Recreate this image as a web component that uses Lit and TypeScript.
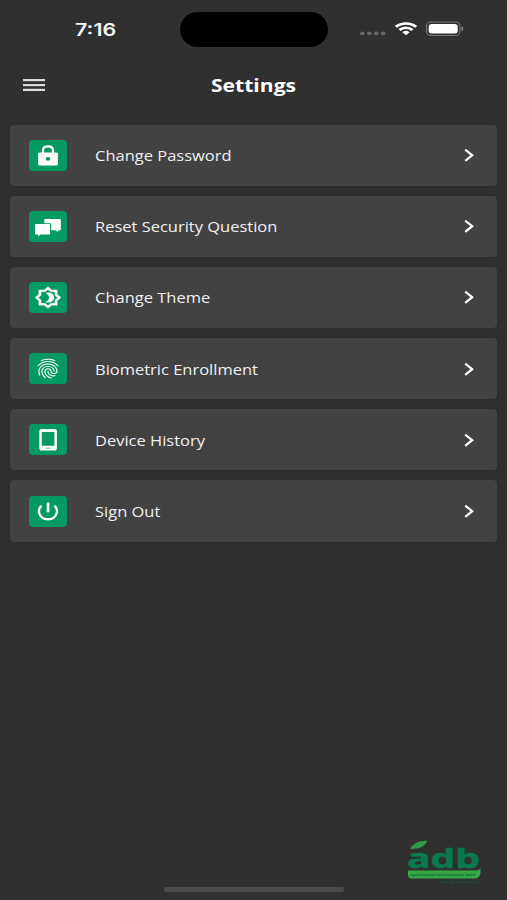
import { LitElement, html, svg, css, type SVGTemplateResult } from "lit";
import { customElement, property } from "lit/decorators.js";

const icons: Record<string, SVGTemplateResult> = {
  lock: svg`
    <path d="M14 13.5V10.6C14 7.8 16.1 6.3 19 6.3S24 7.8 24 10.6V13.5" fill="none" stroke="#fff" stroke-width="2.3"/>
    <rect x="9.1" y="12.4" width="19.8" height="13.2" rx="1.6"/>
    <ellipse cx="19" cy="18.8" rx="2.3" ry="1.9" fill="#049a62"/>`,
  chat: svg`
    <path d="M16 8H31.1Q31.8 8 31.8 8.7V18.6Q31.8 19.3 31.1 19.3H29.6L28.6 20.9L26.6 19.3H22.2V13.4Q22.2 12.2 21 12.2H15.3V8.7Q15.3 8 16 8Z"/>
    <path d="M6.7 13.1H20.4Q21.1 13.1 21.1 13.8V22.7Q21.1 23.4 20.4 23.4H11.6L9.6 25.2L9 23.4H6.7Q6 23.4 6 22.7V13.8Q6 13.1 6.7 13.1Z"/>`,
  theme: svg`<g transform="translate(5.2 4.1) scale(1.15 .955)" stroke="#fff" stroke-width=".35">
    <path d="M20 8.69V4h-4.69L12 .69 8.69 4H4v4.69L.69 12 4 15.31V20h4.69L12 23.31 15.31 20H20v-4.69L23.31 12 20 8.69zm-2 5.79V18h-3.52L12 20.48 9.52 18H6v-3.52L3.52 12 6 9.52V6h3.52L12 3.52 14.48 6H18v3.52L20.48 12 18 14.48z"/>
    <path d="M12.29 7c-.74 0-1.45.17-2.08.46 1.72.79 2.92 2.53 2.92 4.54s-1.2 3.75-2.92 4.54c.63.29 1.34.46 2.08.46 2.76 0 5-2.24 5-5s-2.24-5-5-5z"/></g>`,
  finger: svg`<path transform="translate(4.95 3.7) scale(1.17 .99)" d="M17.81 4.47c-.08 0-.16-.02-.23-.06C15.66 3.42 14 3 12.01 3c-1.98 0-3.86.47-5.57 1.41-.24.13-.54.04-.68-.2-.13-.24-.04-.55.2-.68C7.82 2.52 9.86 2 12.01 2c2.13 0 3.99.47 6.03 1.52.25.13.34.43.21.67-.09.18-.26.28-.44.28zM3.5 9.72c-.1 0-.2-.03-.29-.09-.23-.16-.28-.47-.12-.7.99-1.4 2.25-2.5 3.75-3.27C9.98 4.04 14 4.03 17.15 5.65c1.5.77 2.76 1.86 3.75 3.25.16.22.11.54-.12.7-.23.16-.54.11-.7-.12-.9-1.26-2.04-2.25-3.39-2.94-2.87-1.47-6.54-1.47-9.4.01-1.36.7-2.5 1.7-3.4 2.96-.08.14-.23.21-.39.21zm6.25 12.07c-.13 0-.26-.05-.35-.15-.87-.87-1.34-1.43-2.01-2.64-.69-1.23-1.05-2.73-1.05-4.34 0-2.97 2.54-5.39 5.66-5.39s5.66 2.42 5.66 5.39c0 .28-.22.5-.5.5s-.5-.22-.5-.5c0-2.42-2.09-4.39-4.66-4.39-2.57 0-4.66 1.97-4.66 4.39 0 1.44.32 2.77.93 3.85.64 1.15 1.08 1.64 1.85 2.42.19.2.19.51 0 .71-.11.1-.24.15-.37.15zm7.17-1.85c-1.19 0-2.24-.3-3.1-.89-1.49-1.01-2.38-2.65-2.38-4.39 0-.28.22-.5.5-.5s.5.22.5.5c0 1.41.72 2.74 1.94 3.56.71.48 1.54.71 2.54.71.24 0 .64-.03 1.04-.1.27-.05.53.13.58.41.05.27-.13.53-.41.58-.57.11-1.07.12-1.21.12zM14.91 22c-.04 0-.09-.01-.13-.02-1.59-.44-2.63-1.03-3.72-2.1-1.4-1.39-2.17-3.24-2.17-5.22 0-1.62 1.38-2.94 3.08-2.94 1.7 0 3.08 1.32 3.08 2.94 0 1.07.93 1.94 2.08 1.94s2.08-.87 2.08-1.94c0-3.77-3.25-6.83-7.25-6.83-2.84 0-5.44 1.58-6.61 4.03-.39.81-.59 1.76-.59 2.8 0 .78.07 2.01.67 3.61.1.26-.03.55-.29.64-.26.1-.55-.04-.64-.29-.49-1.31-.73-2.61-.73-3.96 0-1.2.23-2.29.68-3.24 1.33-2.79 4.28-4.6 7.51-4.6 4.55 0 8.25 3.51 8.25 7.83 0 1.62-1.38 2.94-3.08 2.94s-3.08-1.32-3.08-2.94c0-1.07-.93-1.94-2.08-1.94s-2.08.87-2.08 1.94c0 1.71.66 3.31 1.87 4.51.95.94 1.86 1.46 3.27 1.85.27.07.42.35.35.61-.05.23-.26.38-.47.38z"/>`,
  phone: svg`<path fill-rule="evenodd" d="M13 5H25.2C26.9 5 27.9 5.9 27.9 7.3V24.2C27.9 25.6 26.9 26.5 25.2 26.5H13C11.3 26.5 10.3 25.6 10.3 24.2V7.3C10.3 5.9 11.3 5 13 5ZM12.8 8V21.8H25.4V8ZM16.8 23.7V24.6H21.4V23.7Z"/>`,
  power: svg`<path d="M12 9.3C6.7 13.6 9.3 22.9 19 22.9S31.3 13.600 26 9.3" transform="translate(1.5 .4) scale(.92 1)" fill="none" stroke="#fff" stroke-width="2.5"/>
    <rect x="17.7" y="6.5" width="2.7" height="9.8"/>`,
};

const rows = [
  { icon: "lock", label: "Change Password" },
  { icon: "chat", label: "Reset Security Question" },
  { icon: "theme", label: "Change Theme" },
  { icon: "finger", label: "Biometric Enrollment" },
  { icon: "phone", label: "Device History" },
  { icon: "power", label: "Sign Out" },
];

@customElement("setting-row")
class SettingRow extends LitElement {
  @property() icon = "";
  @property() label = "";

  static styles = css`
    :host {
      display: flex;
      align-items: center;
      height: 61.2px;
      box-sizing: border-box;
      padding: 0 22px 0 19px;
      border-radius: 4px;
      background: #424242;
      box-shadow: 0 0 2px rgba(0, 0, 0, 0.2);
    }
    .tile { width: 38px; height: 31px; border-radius: 4px; background: #049a62; fill: #fff; flex: none; }
    .label {
      flex: 1;
      margin-left: 28px;
      padding-top: 2px;
      transform: scaleX(1.177);
      transform-origin: left center;
      font-size: 14px;
      line-height: 20px;
      color: #f0f0f0;
      white-space: nowrap;
    }
    .chevron { width: 12px; height: 16px; flex: none; }
  `;

  render() {
    return html`
      <svg class="tile" viewBox="0 0 38 31">${icons[this.icon]}</svg>
      <span class="label">${this.label}</span>
      <svg class="chevron" viewBox="0 0 12 16">
        <path d="M2.200 2.600L9.200 8.200L2.200 13.800" fill="none" stroke="#fff" stroke-width="2.200"/>
      </svg>`;
  }
}

@customElement("app-root")
class AppRoot extends LitElement {
  static styles = css`
    :host {
      display: flex;
      flex-direction: column;
      box-sizing: border-box;
      width: 507px;
      height: 900px;
      background: #303030;
      font-family: "Open Sans", sans-serif;
      overflow: hidden;
    }
    .status { display: grid; grid-template-columns: 180px 148px 1fr; height: 58px; align-items: center; }
    .time {
      justify-self: start;
      margin-left: 75px;
      padding-top: 1px;
      transform: scaleX(1.26);
      transform-origin: left center;
      font: 600 17px/20px Inter, sans-serif;
      color: #f4f4f4;
    }
    .island { height: 35px; border-radius: 18px; background: #000; }
    .signals { width: 110px; height: 20px; margin-left: 30px; }
    .bar { display: grid; grid-template-columns: 120px 1fr 120px; height: 54px; align-items: center; }
    .menu { width: 22px; height: 14px; margin-left: 23px; }
    .title {
      margin: 0;
      padding-top: 1px;
      text-align: center;
      transform: scaleX(1.24);
      font-size: 17px;
      line-height: 24px;
      font-weight: 700;
      color: #fff;
    }
    .list { display: flex; flex-direction: column; gap: 10px; padding: 12.5px 10px 0; }
    .logo { width: 80px; height: 50px; margin: auto 23px 0 auto; }
    .home { width: 180px; height: 5px; border-radius: 2px; background: #4b4b4b; margin: 0 0 8px 163.5px; }
  `;

  render() {
    return html`
      <div class="status">
        <span class="time">7:16</span>
        <div class="island"></div>
        <svg class="signals" viewBox="358 19 110 20">
          <g fill="#666">
            ${[362.3, 369.3, 376.3, 383.3].map((x) => svg`<ellipse cx=${x} cy="33.4" rx="2.3" ry="1.9"/>`)}
          </g>
          <g transform="translate(406 35.2) scale(1.22 1)" fill="none" stroke="#fff" stroke-width="2.5">
            <path d="M-8.3 -8.4A11.800 11.800 0 0 1 8.300 -8.400"/>
            <path d="M-5.300 -5.200A7.500 7.500 0 0 1 5.300 -5.200"/>
            <path d="M0 0L-2.900 -2.900A4.100 4.100 0 0 1 2.900 -2.900Z" fill="#fff" stroke="none"/>
          </g>
          <rect x="426.500" y="22" width="33.500" height="13.500" rx="4.500" ry="4" fill="none" stroke="#777" stroke-width="1.200"/>
          <rect x="428.700" y="24" width="29" height="9.500" rx="3" ry="2.500" fill="#fff"/>
          <path d="M461.500 26.500Q463.300 27 463.300 28.800Q463.300 30.600 461.500 31.100Z" fill="#888"/>
        </svg>
      </div>
      <div class="bar">
        <svg class="menu" viewBox="0 0 22 14" fill="#dcdcdc">
          <rect y="1" width="22" height="2.200"/><rect y="6" width="22" height="2.200"/><rect y="10.800" width="22" height="2.200"/>
        </svg>
        <h1 class="title">Settings</h1>
      </div>
      <div class="list">
        ${rows.map((r) => html`<setting-row .icon=${r.icon} .label=${r.label}></setting-row>`)}
      </div>
      <svg class="logo" viewBox="404 837 80 50" font-family="Open Sans, sans-serif">
        <text x="407" y="867.5" font-size="27.5" font-weight="700" fill="#087a4d" stroke="#087a4d" stroke-width=".5" textLength="73" lengthAdjust="spacingAndGlyphs">adb</text>
        <path d="M410 849.500Q413 841 427.500 840.500Q424 849 413 848.800Z" fill="#2d9c48"/>
        <path d="M408 870.500H476Q479 870.500 480.500 868.500V873Q480 878.500 474 878.500H412Q408 878.500 408 875Z" fill="#36a846"/>
        <text x="410" y="875.700" font-size="3.500" font-weight="700" fill="#14713c" textLength="66" lengthAdjust="spacingAndGlyphs">agricultural development bank</text>
        <text x="440" y="883.300" font-size="3.500" fill="#0b6341" textLength="38" lengthAdjust="spacingAndGlyphs">your agric and more</text>
      </svg>
      <div class="home"></div>`;
  }
}
